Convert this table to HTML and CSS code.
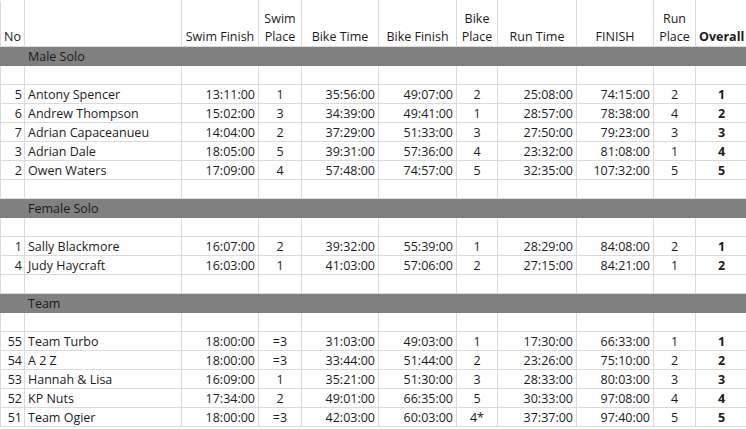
FILE: index.html
```html
<!DOCTYPE html>
<html>
<head>
<meta charset="utf-8">
<link rel="stylesheet" href="styles.css">
</head>
<body>
<table class="sheet">
  <colgroup>
    <col class="c-no"><col class="c-name"><col class="c-sf"><col class="c-sp"><col class="c-bt"><col class="c-bf"><col class="c-bp"><col class="c-rt"><col class="c-fin"><col class="c-rp"><col class="c-ov">
  </colgroup>
  <thead>
    <tr class="head">
      <th class="left">No</th><th></th><th>Swim Finish</th><th>Swim<br>Place</th><th>Bike Time</th><th>Bike Finish</th><th>Bike<br>Place</th><th>Run Time</th><th>FINISH</th><th>Run<br>Place</th><th class="bold">Overall</th>
    </tr>
  </thead>
  <tbody>
    <tr class="group"><td></td><td>Male Solo</td><td></td><td></td><td></td><td></td><td></td><td></td><td></td><td></td><td></td></tr>
    <tr><td></td><td></td><td></td><td></td><td></td><td></td><td></td><td></td><td></td><td></td><td></td></tr>
    <tr><td class="n">5</td><td class="nm">Antony Spencer</td><td class="n">13:11:00</td><td class="c">1</td><td class="n">35:56:00</td><td class="n">49:07:00</td><td class="c">2</td><td class="n">25:08:00</td><td class="n">74:15:00</td><td class="c">2</td><td class="c b">1</td></tr>
    <tr><td class="n">6</td><td class="nm">Andrew Thompson</td><td class="n">15:02:00</td><td class="c">3</td><td class="n">34:39:00</td><td class="n">49:41:00</td><td class="c">1</td><td class="n">28:57:00</td><td class="n">78:38:00</td><td class="c">4</td><td class="c b">2</td></tr>
    <tr><td class="n">7</td><td class="nm">Adrian Capaceanueu</td><td class="n">14:04:00</td><td class="c">2</td><td class="n">37:29:00</td><td class="n">51:33:00</td><td class="c">3</td><td class="n">27:50:00</td><td class="n">79:23:00</td><td class="c">3</td><td class="c b">3</td></tr>
    <tr><td class="n">3</td><td class="nm">Adrian Dale</td><td class="n">18:05:00</td><td class="c">5</td><td class="n">39:31:00</td><td class="n">57:36:00</td><td class="c">4</td><td class="n">23:32:00</td><td class="n">81:08:00</td><td class="c">1</td><td class="c b">4</td></tr>
    <tr><td class="n">2</td><td class="nm">Owen Waters</td><td class="n">17:09:00</td><td class="c">4</td><td class="n">57:48:00</td><td class="n">74:57:00</td><td class="c">5</td><td class="n">32:35:00</td><td class="n">107:32:00</td><td class="c">5</td><td class="c b">5</td></tr>
    <tr><td></td><td></td><td></td><td></td><td></td><td></td><td></td><td></td><td></td><td></td><td></td></tr>
    <tr class="group"><td></td><td>Female Solo</td><td></td><td></td><td></td><td></td><td></td><td></td><td></td><td></td><td></td></tr>
    <tr><td></td><td></td><td></td><td></td><td></td><td></td><td></td><td></td><td></td><td></td><td></td></tr>
    <tr><td class="n">1</td><td class="nm">Sally Blackmore</td><td class="n">16:07:00</td><td class="c">2</td><td class="n">39:32:00</td><td class="n">55:39:00</td><td class="c">1</td><td class="n">28:29:00</td><td class="n">84:08:00</td><td class="c">2</td><td class="c b">1</td></tr>
    <tr><td class="n">4</td><td class="nm">Judy Haycraft</td><td class="n">16:03:00</td><td class="c">1</td><td class="n">41:03:00</td><td class="n">57:06:00</td><td class="c">2</td><td class="n">27:15:00</td><td class="n">84:21:00</td><td class="c">1</td><td class="c b">2</td></tr>
    <tr><td></td><td></td><td></td><td></td><td></td><td></td><td></td><td></td><td></td><td></td><td></td></tr>
    <tr class="group"><td></td><td>Team</td><td></td><td></td><td></td><td></td><td></td><td></td><td></td><td></td><td></td></tr>
    <tr><td></td><td></td><td></td><td></td><td></td><td></td><td></td><td></td><td></td><td></td><td></td></tr>
    <tr><td class="n">55</td><td class="nm">Team Turbo</td><td class="n">18:00:00</td><td class="c">=3</td><td class="n">31:03:00</td><td class="n">49:03:00</td><td class="c">1</td><td class="n">17:30:00</td><td class="n">66:33:00</td><td class="c">1</td><td class="c b">1</td></tr>
    <tr><td class="n">54</td><td class="nm">A 2 Z</td><td class="n">18:00:00</td><td class="c">=3</td><td class="n">33:44:00</td><td class="n">51:44:00</td><td class="c">2</td><td class="n">23:26:00</td><td class="n">75:10:00</td><td class="c">2</td><td class="c b">2</td></tr>
    <tr><td class="n">53</td><td class="nm">Hannah &amp; Lisa</td><td class="n">16:09:00</td><td class="c">1</td><td class="n">35:21:00</td><td class="n">51:30:00</td><td class="c">3</td><td class="n">28:33:00</td><td class="n">80:03:00</td><td class="c">3</td><td class="c b">3</td></tr>
    <tr><td class="n">52</td><td class="nm">KP Nuts</td><td class="n">17:34:00</td><td class="c">2</td><td class="n">49:01:00</td><td class="n">66:35:00</td><td class="c">5</td><td class="n">30:33:00</td><td class="n">97:08:00</td><td class="c">4</td><td class="c b">4</td></tr>
    <tr><td class="n">51</td><td class="nm">Team Ogier</td><td class="n">18:00:00</td><td class="c">=3</td><td class="n">42:03:00</td><td class="n">60:03:00</td><td class="c">4*</td><td class="n">37:37:00</td><td class="n">97:40:00</td><td class="c">5</td><td class="c b">5</td></tr>
  </tbody>
</table>
</body>
</html>
```

FILE: styles.css
```css
html, body {
  margin: 0;
  padding: 0;
  background: #ffffff;
}

.sheet {
  border-collapse: collapse;
  table-layout: fixed;
  width: 747px;
  font-family: "Open Sans", "Liberation Sans", sans-serif;
  font-size: 12.5px;
  color: #1c1c1c;
}

.c-no { width: 24px; }
.c-name { width: 157px; }
.c-sf { width: 77px; }
.c-sp { width: 43px; }
.c-bt { width: 77px; }
.c-bf { width: 78px; }
.c-bp { width: 41px; }
.c-rt { width: 79px; }
.c-fin { width: 77px; }
.c-rp { width: 42px; }
.c-ov { width: 52px; }

.sheet th,
.sheet td {
  border: 1px solid #dadada;
  padding: 0 3px 0 3px;
  height: 18px;
  line-height: 16px;
  vertical-align: bottom;
  white-space: nowrap;
  overflow: hidden;
}

.head th {
  height: 45px;
  font-weight: normal;
  text-align: center;
  line-height: 18px;
  padding-bottom: 0;
  border-top-color: #ffffff;
}

.head th.left {
  text-align: left;
}

.head th.bold {
  font-weight: bold;
}

.group td {
  background: #808080;
  border-color: #808080;
  color: #1a1a1a;
}

.n { text-align: right; }
.c { text-align: center; }
.b { font-weight: bold; }
.nm { text-align: left; }
.sheet td.n:first-child { padding-right: 2px; padding-left: 0; }
```
